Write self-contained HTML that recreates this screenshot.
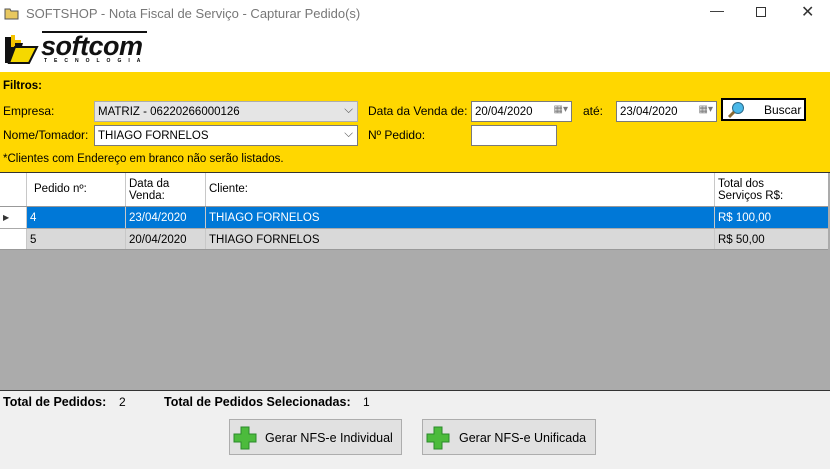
<!DOCTYPE html>
<html><head><meta charset="utf-8"><style>
*{margin:0;padding:0;box-sizing:border-box}
body{width:830px;height:469px;overflow:hidden;background:#f0f0f0;font-family:"Liberation Sans",sans-serif;font-size:12px;color:#000;position:relative}
.a{position:absolute}
.title{top:0;left:0;width:830px;height:28px;background:#fff;color:#777;font-size:13px}
.logo{top:28px;left:0;width:830px;height:44px;background:#fff}
.yel{top:72px;left:0;width:830px;height:100px;background:#ffd700}
.box{background:#fff;border:1px solid #7a7a7a;height:21px;padding:4px 3px 2px;font-size:11.5px}
.grid{top:172px;left:0;width:830px;height:219px;background:#ababab;border-top:1px solid #333;border-bottom:1px solid #333}
.row{position:absolute;left:0;width:828px;height:22px;font-size:11.5px}
.c{position:absolute;top:0;height:100%;border-right:1px solid #c8c8c8;padding:5px 3px 3px}
.btn{background:#e1e1e1;border:1px solid #adadad;height:36px;font-size:12.5px}
</style></head><body>
<div class="a title">
<svg class="a" style="left:4px;top:6px" width="15" height="14"><path d="M1 3h5l1 2h7v8H1z" fill="#e8c860" stroke="#555"/></svg>
<span class="a" style="left:26px;top:6px">SOFTSHOP - Nota Fiscal de Serviço - Capturar Pedido(s)</span>
<span class="a" style="left:710px;top:2px;font-size:14px;color:#333">—</span>
<div class="a" style="left:756px;top:7px;width:10px;height:10px;border:1px solid #333"></div>
<span class="a" style="left:801px;top:2px;font-size:16px;color:#333">✕</span>
</div>
<div class="a logo">
<svg class="a" style="left:3px;top:5px" width="36" height="32"><path d="M2 4h8v6h10l-6 20H2z" fill="#111"/><path d="M8 2h4v5h6v3h-6v4H8z" fill="#f5c400"/><path d="M6 30l6-16h22l-8 16z" fill="#f5d800" stroke="#111" stroke-width="2"/></svg>
<span class="a" style="left:41px;top:3px;font-size:27px;font-weight:bold;font-style:italic;letter-spacing:-0.5px;color:#111">softcom</span>
<div class="a" style="left:42px;top:3px;width:105px;height:2px;background:#111"></div>
<span class="a" style="left:44px;top:30px;font-size:5px;letter-spacing:7px;font-weight:bold">TECNOLOGIA</span>
</div>
<div class="a yel">
<b class="a" style="left:3px;top:8px;font-size:11.5px">Filtros:</b>
<span class="a" style="left:3px;top:32px">Empresa:</span>
<div class="a box" style="left:94px;top:29px;width:264px;background:#e5e5e5;border-color:#adadad">MATRIZ - 06220266000126<span class="a" style="right:4px;top:2px;color:#555">⌵</span></div>
<span class="a" style="left:3px;top:56px">Nome/Tomador:</span>
<div class="a box" style="left:94px;top:53px;width:264px">THIAGO FORNELOS<span class="a" style="right:4px;top:2px;color:#555">⌵</span></div>
<span class="a" style="left:368px;top:32px">Data da Venda de:</span>
<div class="a box" style="left:471px;top:29px;width:101px">20/04/2020<span class="a" style="right:3px;top:2px;color:#777;font-size:10px">▦▾</span></div>
<span class="a" style="left:583px;top:32px">até:</span>
<div class="a box" style="left:616px;top:29px;width:101px">23/04/2020<span class="a" style="right:3px;top:2px;color:#777;font-size:10px">▦▾</span></div>
<div class="a" style="left:721px;top:26px;width:85px;height:23px;background:#fff;border:2px solid #000">
<svg class="a" style="left:4px;top:1px" width="18" height="18"><circle cx="11" cy="7" r="5.5" fill="#4ab8e8" stroke="#2a6a8a"/><path d="M7 11l-5 5" stroke="#8a6a30" stroke-width="3"/></svg>
<span class="a" style="left:41px;top:3px">Buscar</span></div>
<span class="a" style="left:368px;top:56px">Nº Pedido:</span>
<div class="a box" style="left:471px;top:53px;width:86px"></div>
<span class="a" style="left:3px;top:81px;font-size:11.5px">*Clientes com Endereço em branco não serão listados.</span>
</div>
<div class="a grid">
<div class="row" style="top:0;height:33px;background:#fff">
<div class="c" style="left:0;width:27px"></div>
<div class="c" style="left:27px;width:99px;padding-top:10px;padding-left:7px">Pedido nº:</div>
<div class="c" style="left:126px;width:80px;padding-top:5px;line-height:12px">Data da<br>Venda:</div>
<div class="c" style="left:206px;width:509px;padding-top:10px">Cliente:</div>
<div class="c" style="left:715px;width:113px;padding-top:5px;line-height:12px;border:0">Total dos<br>Serviços R$:</div>
</div>
<div class="row" style="top:33px;background:#0078d7;color:#fff;border-top:1px solid #999">
<div class="c" style="left:0;width:27px;background:#fff;color:#333;font-size:8px;padding-top:6px">▶</div>
<div class="c" style="left:27px;width:99px">4</div>
<div class="c" style="left:126px;width:80px">23/04/2020</div>
<div class="c" style="left:206px;width:509px">THIAGO FORNELOS</div>
<div class="c" style="left:715px;width:113px;border:0">R$ 100,00</div>
</div>
<div class="row" style="top:55px;background:#d9d9d9;border-top:1px solid #aaa;border-bottom:1px solid #999">
<div class="c" style="left:0;width:27px;background:#fff"></div>
<div class="c" style="left:27px;width:99px">5</div>
<div class="c" style="left:126px;width:80px">20/04/2020</div>
<div class="c" style="left:206px;width:509px">THIAGO FORNELOS</div>
<div class="c" style="left:715px;width:113px;border:0">R$ 50,00</div>
</div>
</div>
<b class="a" style="left:3px;top:395px;font-size:12.5px">Total de Pedidos:</b><span class="a" style="left:119px;top:395px">2</span>
<b class="a" style="left:164px;top:395px;font-size:12.5px">Total de Pedidos Selecionadas:</b><span class="a" style="left:363px;top:395px">1</span>
<div class="a btn" style="left:229px;top:419px;width:173px"><svg class="a" style="left:3px;top:6px" width="24" height="24"><path d="M8 1h8v7h7v8h-7v7H8v-7H1V8h7z" fill="#4cbb3c" stroke="#2a8a2a"/></svg><span class="a" style="left:35px;top:11px">Gerar NFS-e Individual</span></div>
<div class="a btn" style="left:422px;top:419px;width:174px"><svg class="a" style="left:3px;top:6px" width="24" height="24"><path d="M8 1h8v7h7v8h-7v7H8v-7H1V8h7z" fill="#4cbb3c" stroke="#2a8a2a"/></svg><span class="a" style="left:36px;top:11px">Gerar NFS-e Unificada</span></div>
</body></html>
